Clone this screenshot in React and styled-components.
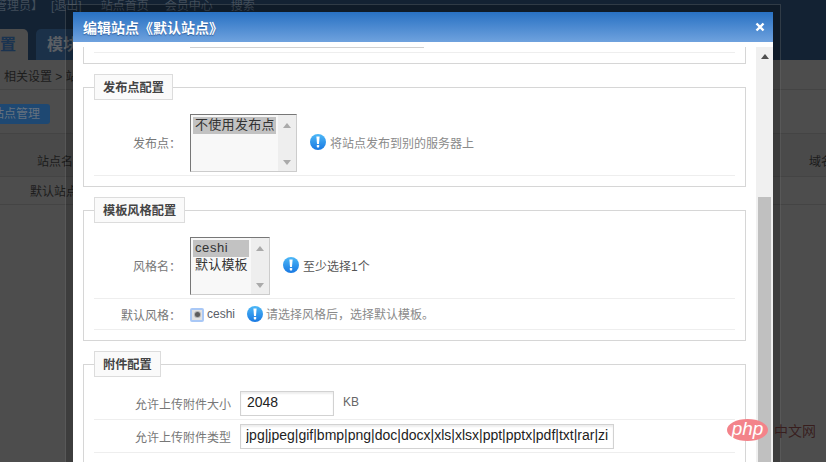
import React from 'react'
import styled, { createGlobalStyle } from 'styled-components'

const GlobalStyle = createGlobalStyle`
    html, body {
        margin: 0;
        padding: 0;
        background: #4d4d4d;
        font-family: "Liberation Sans", "Noto Sans CJK SC", sans-serif;
        font-size: 12px;
    }
`

const Page = styled.div`
    position: relative;
    width: 826px;
    height: 462px;
    overflow: hidden;
    background: #4d4d4d;
`

/* dimmed site behind the dialog */
const TopBar = styled.div`
    height: 60px;
    background: #132233;
    overflow: hidden;
    display: flex;
    flex-direction: column;
`
const TopLinks = styled.div`
    height: 13px;
    flex: none;
    margin: -1px 0 17px -5px;
    display: flex;
    color: #424e5b;
    font-size: 12px;
    line-height: 14px;
    white-space: nowrap;
`
const TopLink = styled.span`
    margin-right: ${(props) => props.gap || 0}px;
`
const Tabs = styled.div`
    flex: 1;
    display: flex;
    gap: 8px;
    overflow: hidden;
`
const Tab = styled.div`
    width: ${(props) => props.width}px;
    display: flex;
    justify-content: ${(props) => (props.active ? 'flex-end' : 'flex-start')};
    padding: 0 ${(props) => (props.active ? 12 : 0)}px 0 ${(props) => (props.active ? 0 : 11)}px;
    box-sizing: border-box;
    border-radius: ${(props) => (props.active ? '0 5px 0 0' : '5px 0 0 0')};
    background: ${(props) => (props.active ? '#4d4d4d' : '#1b3149')};
    color: ${(props) => (props.active ? '#1a3350' : '#5b5f64')};
    font-size: 16px;
    font-weight: bold;
    line-height: 32px;
    white-space: nowrap;
    overflow: hidden;
`
const Breadcrumb = styled.div`
    height: 29px;
    padding-left: 4px;
    border-bottom: 1px solid #444;
    color: #1c1c1c;
    font-size: 12px;
    line-height: 34px;
`
const Toolbar = styled.div`
    height: 44px;
    padding-top: 14px;
    box-sizing: border-box;
    border-bottom: 1px solid #444;
`
const ManageButton = styled.div`
    width: 60px;
    height: 20px;
    margin-left: -10px;
    padding-left: 2px;
    box-sizing: border-box;
    border-radius: 3px;
    background: #1e4872;
    color: #66727f;
    font-size: 12px;
    line-height: 21px;
    white-space: nowrap;
    overflow: hidden;
`
const TableRow = styled.div`
    height: ${(props) => props.height}px;
    padding: ${(props) => props.top}px 0 0;
    box-sizing: border-box;
    border-bottom: 1px solid #444;
    background: ${(props) => props.bg || 'transparent'};
    color: #1c1c1c;
    font-size: 12px;
    display: flex;
    justify-content: space-between;
    white-space: nowrap;
`
const Cell = styled.span`
    margin-left: ${(props) => props.left || 0}px;
    margin-right: ${(props) => props.right || 0}px;
`

/* translucent frame + dialog */
const Frame = styled.div`
    position: absolute;
    left: 65px;
    top: 4px;
    width: 716px;
    height: 480px;
    padding: 7px;
    box-sizing: border-box;
    border: 1px solid rgba(255, 255, 255, 0.14);
    background: rgba(0, 0, 0, 0.2);
`
const Dialog = styled.div`
    height: 100%;
    background: #fff;
    display: flex;
    flex-direction: column;
`
const DialogHeader = styled.div`
    height: 30px;
    flex: none;
    box-sizing: border-box;
    padding: 0 8px 0 10px;
    background: linear-gradient(#2871c3, #6fa2de);
    display: flex;
    align-items: center;
    justify-content: space-between;
`
const Title = styled.div`
    color: #fff;
    font-size: 14px;
    font-weight: bold;
    text-shadow: 0 1px 1px rgba(20, 60, 120, 0.6);
`
const DialogBody = styled.div`
    flex: 1;
    min-height: 0;
    display: flex;
    padding-top: 5px;
`
const Content = styled.div`
    flex: 1;
    min-width: 0;
    padding: 0 10px;
    overflow: hidden;
`
const Scrollbar = styled.div`
    width: 17px;
    flex: none;
    box-sizing: border-box;
    padding: 0 2px;
    background: #f0f0f0;
    display: flex;
    flex-direction: column;
    align-items: center;
`
const ScrollArrow = styled.div`
    width: 0;
    height: 0;
    margin-top: 7px;
    border-left: 4px solid transparent;
    border-right: 4px solid transparent;
    border-bottom: 5px solid #505050;
`
const ScrollThumb = styled.div`
    width: 13px;
    flex: 1;
    margin-top: 138px;
    background: #c0c0c0;
`

const ClippedBox = styled.div`
    height: 17px;
    box-sizing: border-box;
    padding: 0 10px;
    border: 1px solid #d6d6d6;
    border-top: 0;
`
const ClippedInput = styled.div`
    width: 234px;
    height: 1px;
    margin-left: 96px;
    background: #d0d0d0;
`
const ClippedLine = styled.div`
    height: 1px;
    margin-top: 4px;
    background: #eee;
`

const Group = styled.fieldset`
    margin: 10px 0 0;
    padding: 0 10px 10px;
    min-width: 0;
    border: 1px solid #d6d6d6;
`
const GroupTitle = styled.legend`
    height: 26px;
    box-sizing: border-box;
    margin: 0;
    padding: 0 8px;
    border: 1px solid #dcdcdc;
    background: #fafafa;
    color: #444;
    font-size: 12.2px;
    font-weight: bold;
    line-height: 27px;
`
const Row = styled.div`
    display: flex;
    align-items: center;
    padding: ${(props) => props.pad || '4px 0'};
    min-height: ${(props) => props.min || 0}px;
    box-sizing: ${(props) => (props.min ? 'border-box' : 'content-box')};
    border-bottom: ${(props) => (props.plain ? 0 : '1px solid #eee')};
`
const Label = styled.label`
    width: ${(props) => props.width || 96}px;
    flex: none;
    box-sizing: border-box;
    padding-right: 9px;
    padding-bottom: ${(props) => (props.lift ? 2 : 0)}px;
    color: #777;
    font-size: 12px;
    text-align: right;
    white-space: nowrap;
`
const ListBox = styled.div`
    width: ${(props) => props.width}px;
    height: 58px;
    flex: none;
    box-sizing: border-box;
    border: 1px solid;
    border-color: #777 #ccc #ccc #777;
    background: #f8f8f8;
    display: flex;
`
const Options = styled.div`
    flex: 1;
    min-width: 0;
    padding: 2px 2px 0;
`
const Option = styled.div`
    height: 17px;
    padding-left: 2px;
    background: ${(props) => (props.selected ? '#c2c2c2' : 'transparent')};
    color: #333;
    font-size: 13px;
    line-height: 15px;
    letter-spacing: ${(props) => props.spacing || 0}px;
    white-space: nowrap;
`
const ListScroll = styled.div`
    width: 18px;
    flex: none;
    background: #eee;
    display: flex;
    flex-direction: column;
    align-items: center;
    justify-content: space-between;
    padding: 8px 0 6px;
    box-sizing: border-box;
`
const ListArrow = styled.div`
    width: 0;
    height: 0;
    border-left: 4px solid transparent;
    border-right: 4px solid transparent;
    border-bottom: ${(props) => (props.down ? 0 : '5px solid #aaa')};
    border-top: ${(props) => (props.down ? '5px solid #aaa' : 0)};
`
const Hint = styled.span`
    display: flex;
    align-items: center;
    gap: ${(props) => props.gap || 4}px;
    margin-left: ${(props) => props.left}px;
    padding-bottom: 2px;
    color: ${(props) => (props.dark ? '#555' : '#8a8a8a')};
    font-size: 12px;
    white-space: nowrap;
`
const RadioBox = styled.span`
    width: 14px;
    height: 14px;
    flex: none;
    box-sizing: border-box;
    border: 2px solid #a9c8f6;
    border-radius: 2px;
    background: #e2e2e2;
    display: flex;
    align-items: center;
    justify-content: center;
`
const RadioDot = styled.span`
    width: 5px;
    height: 5px;
    border-radius: 50%;
    background: #5c5c5c;
    box-shadow: 0 0 0 1px #b4b4b4;
`
const RadioText = styled.span`
    margin-left: 3px;
    padding-bottom: 2px;
    color: #5a6068;
    font-size: 12px;
`
const TextInput = styled.input`
    width: ${(props) => props.width}px;
    height: 25px;
    flex: none;
    box-sizing: border-box;
    padding: 0 ${(props) => props.pad}px 3px;
    border: 1px solid #d2d2d2;
    border-radius: 0;
    outline: 0;
    box-shadow: inset 0 2px 2px #eee;
    color: #222;
    font-family: "Liberation Sans", sans-serif;
    font-size: 14px;
`
const Unit = styled.span`
    margin: -4px 0 0 9px;
    color: #666;
    font-size: 12px;
`
const GreenText = styled.span`
    color: #1a8a1a;
    font-size: 12px;
`

/* php watermark */
const Watermark = styled.div`
    position: absolute;
    left: 727px;
    top: 419px;
    display: flex;
    align-items: center;
    gap: 6px;
`
const WatermarkLogo = styled.div`
    width: 41px;
    height: 22px;
    border-radius: 50%;
    background: #f3838a;
    color: #fff;
    font-size: 19px;
    font-style: italic;
    line-height: 19px;
    text-align: center;
`
const WatermarkText = styled.div`
    color: rgba(50, 15, 15, 0.75);
    font-size: 14px;
    white-space: nowrap;
`

function InfoIcon() {
    return (
        <svg width="16" height="16" viewBox="0 0 16 16" style={{ flex: 'none' }}>
            <defs>
                <linearGradient id="infoFill" x1="0" y1="0" x2="0" y2="1">
                    <stop offset="0" stopColor="#4db8f7" />
                    <stop offset="1" stopColor="#1878e2" />
                </linearGradient>
            </defs>
            <circle cx="8" cy="8" r="8" fill="url(#infoFill)" />
            <path d="M6.4 2.6h3.2L9 10H7z" fill="#fff" />
            <rect x="6.8" y="11" width="2.4" height="2.4" rx="0.6" fill="#fff" />
        </svg>
    )
}

function CloseIcon() {
    return (
        <svg width="10" height="10" viewBox="0 0 10 10">
            <path d="M1.5 1.5l7 7M8.5 1.5l-7 7" stroke="#fff" strokeWidth="2.4" />
        </svg>
    )
}

function App() {
    return (
        <Page>
            <GlobalStyle />
            <TopBar>
                <TopLinks>
                    <TopLink gap={8}>管理员】</TopLink>
                    <TopLink gap={19}>[退出]</TopLink>
                    <TopLink gap={16}>站点首页</TopLink>
                    <TopLink gap={18}>会员中心</TopLink>
                    <TopLink>搜索</TopLink>
                </TopLinks>
                <Tabs>
                    <Tab active width={28}>配置</Tab>
                    <Tab width={60}>模块</Tab>
                </Tabs>
            </TopBar>
            <Breadcrumb>相关设置 &gt; 站点</Breadcrumb>
            <Toolbar>
                <ManageButton>站点管理</ManageButton>
            </Toolbar>
            <TableRow height={43} top={18} bg="#4a4a4a">
                <Cell left={37}>站点名</Cell>
                <Cell right={-7}>域名</Cell>
            </TableRow>
            <TableRow height={28} top={5}>
                <Cell left={30}>默认站点</Cell>
            </TableRow>

            <Frame>
                <Dialog>
                    <DialogHeader>
                        <Title>编辑站点《默认站点》</Title>
                        <CloseIcon />
                    </DialogHeader>
                    <DialogBody>
                        <Content>
                            <ClippedBox>
                                <ClippedInput />
                                <ClippedLine />
                            </ClippedBox>

                            <Group>
                                <GroupTitle>发布点配置</GroupTitle>
                                <Row pad="14px 0 3px">
                                    <Label lift>发布点：</Label>
                                    <ListBox width={107}>
                                        <Options>
                                            <Option selected spacing={0.3}>不使用发布点</Option>
                                        </Options>
                                        <ListScroll>
                                            <ListArrow />
                                            <ListArrow down />
                                        </ListScroll>
                                    </ListBox>
                                    <Hint left={13}><InfoIcon />将站点发布到别的服务器上</Hint>
                                </Row>
                            </Group>

                            <Group>
                                <GroupTitle>模板风格配置</GroupTitle>
                                <Row pad="14px 0 3px">
                                    <Label lift>风格名：</Label>
                                    <ListBox width={80}>
                                        <Options>
                                            <Option selected spacing={0.6}>ceshi</Option>
                                            <Option spacing={0.2}>默认模板</Option>
                                        </Options>
                                        <ListScroll>
                                            <ListArrow />
                                            <ListArrow down />
                                        </ListScroll>
                                    </ListBox>
                                    <Hint left={13} dark><InfoIcon />至少选择1个</Hint>
                                </Row>
                                <Row pad="1px 0 0" min={31}>
                                    <Label>默认风格：</Label>
                                    <RadioBox><RadioDot /></RadioBox>
                                    <RadioText>ceshi</RadioText>
                                    <Hint left={12} gap={3}><InfoIcon />请选择风格后，选择默认模板。</Hint>
                                </Row>
                            </Group>

                            <Group>
                                <GroupTitle>附件配置</GroupTitle>
                                <Row pad="14px 0 3px">
                                    <Label width={146}>允许上传附件大小</Label>
                                    <TextInput readOnly width={94} pad={6} value="2048" />
                                    <Unit>KB</Unit>
                                </Row>
                                <Row pad="4px 0 3px">
                                    <Label width={146}>允许上传附件类型</Label>
                                    <TextInput readOnly width={374} pad={5} value="jpg|jpeg|gif|bmp|png|doc|docx|xls|xlsx|ppt|pptx|pdf|txt|rar|zip" />
                                </Row>
                                <Row pad="6px 0 4px" plain>
                                    <Label width={146}>启用水印：</Label>
                                    <GreenText>开启</GreenText>
                                </Row>
                            </Group>
                        </Content>
                        <Scrollbar>
                            <ScrollArrow />
                            <ScrollThumb />
                        </Scrollbar>
                    </DialogBody>
                </Dialog>
            </Frame>

            <Watermark>
                <WatermarkLogo>php</WatermarkLogo>
                <WatermarkText>中文网</WatermarkText>
            </Watermark>
        </Page>
    )
}

export default App
